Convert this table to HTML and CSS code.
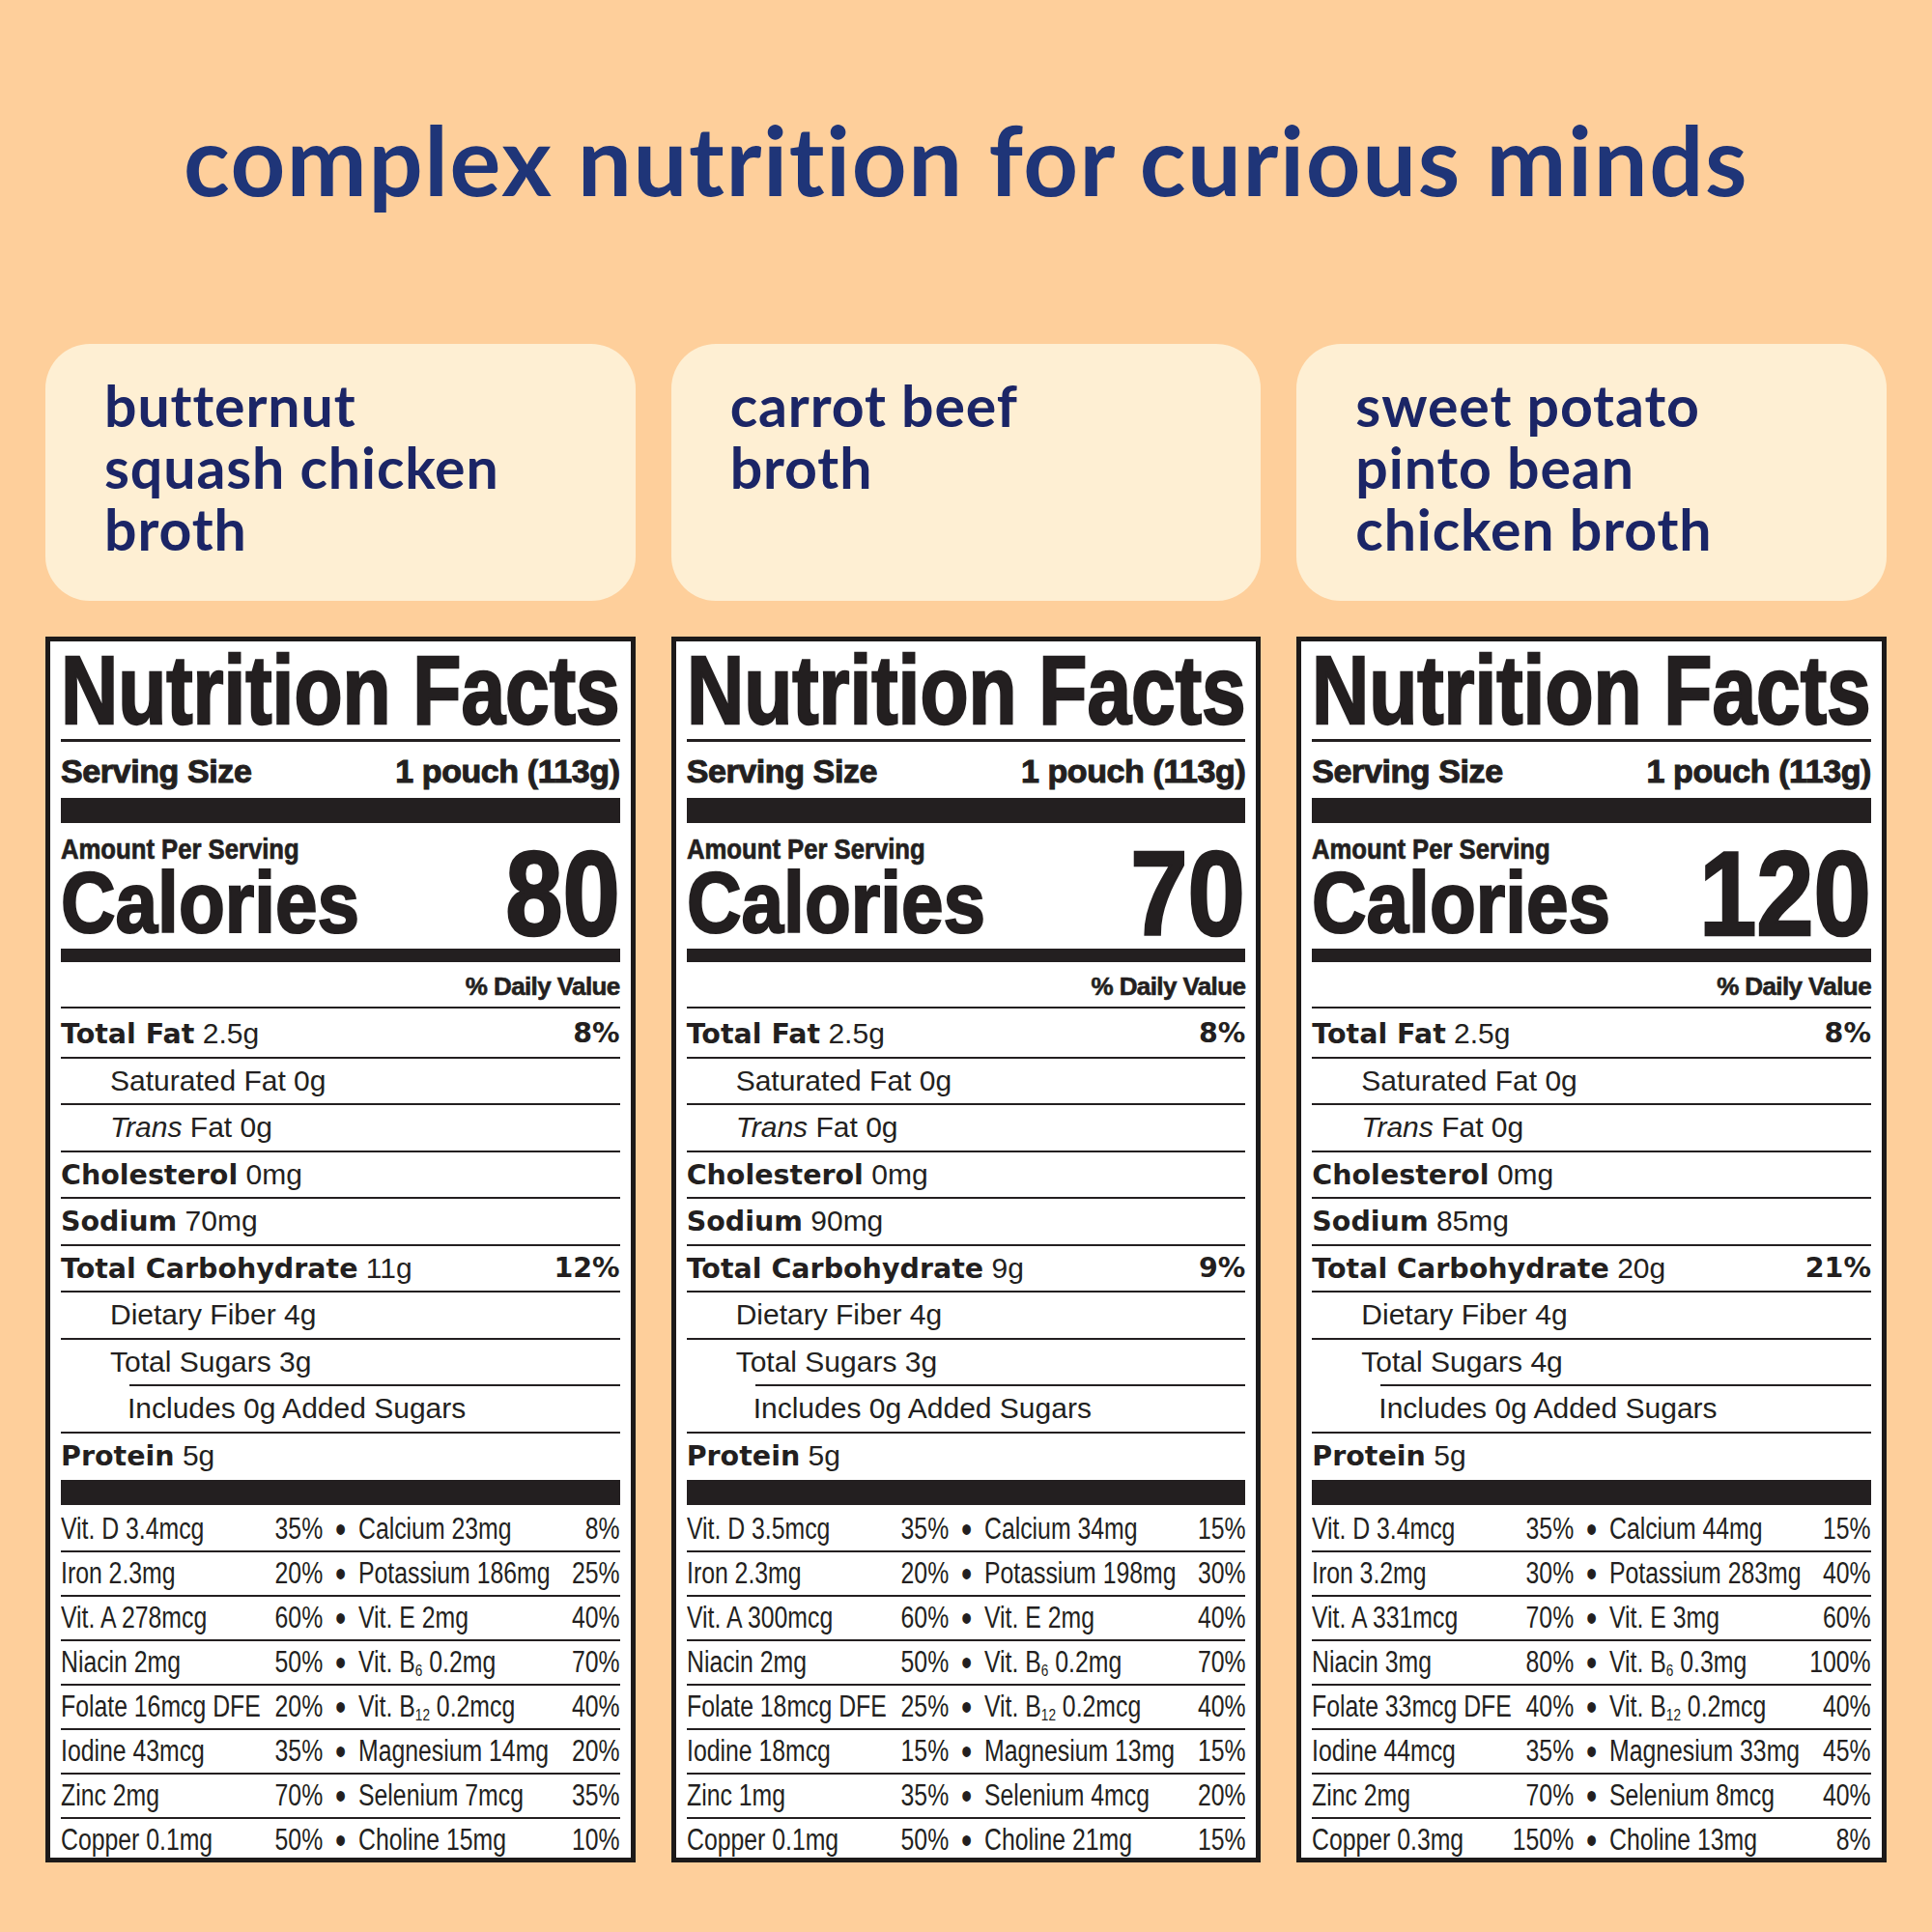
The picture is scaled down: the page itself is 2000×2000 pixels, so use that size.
FILE: index.html
```html
<!DOCTYPE html>
<html>
<head>
<meta charset="utf-8">
<link rel="stylesheet" href="styles.css">
</head>
<body>
<div class="page">
  <h1 class="headline">complex nutrition for curious minds</h1>
  <div class="grid">
    <div class="card"><p>butternut<br>squash chicken<br>broth</p></div>
    <div class="card"><p>carrot beef<br>broth</p></div>
    <div class="card"><p>sweet potato<br>pinto bean<br>chicken broth</p></div>

    <!-- Panel 1 -->
    <div class="panel">
      <div class="nf-title"><span>Nutrition Facts</span></div>
      <div class="serving"><span>Serving Size</span><span>1 pouch (113g)</span></div>
      <div class="cal">
        <div class="cal-left"><div class="amount"><span>Amount Per Serving</span></div><div class="cal-word"><span>Calories</span></div></div>
        <div class="cal-num"><span>80</span></div>
      </div>
      <div class="dv">% Daily Value</div>
      <div class="row r1"><span><b>Total Fat</b> 2.5g</span><b>8%</b></div>
      <div class="row ind"><span>Saturated Fat 0g</span></div>
      <div class="row ind"><span><i>Trans</i> Fat 0g</span></div>
      <div class="row"><span><b>Cholesterol</b> 0mg</span></div>
      <div class="row"><span><b>Sodium</b> 70mg</span></div>
      <div class="row"><span><b>Total Carbohydrate</b> 11g</span><b class="low">12%</b></div>
      <div class="row ind"><span>Dietary Fiber 4g</span></div>
      <div class="row ind sugars"><span>Total Sugars 3g</span></div>
      <div class="row ind2"><span>Includes 0g Added Sugars</span></div>
      <div class="row protein"><span><b>Protein</b> 5g</span></div>
      <div class="vits">
        <div class="vrow"><div class="vin"><div class="vc"><span>Vit. D 3.4mcg</span><span>35%</span></div><span class="dot">•</span><div class="vc"><span>Calcium 23mg</span><span>8%</span></div></div></div>
        <div class="vrow"><div class="vin"><div class="vc"><span>Iron 2.3mg</span><span>20%</span></div><span class="dot">•</span><div class="vc"><span>Potassium 186mg</span><span>25%</span></div></div></div>
        <div class="vrow"><div class="vin"><div class="vc"><span>Vit. A 278mcg</span><span>60%</span></div><span class="dot">•</span><div class="vc"><span>Vit. E 2mg</span><span>40%</span></div></div></div>
        <div class="vrow"><div class="vin"><div class="vc"><span>Niacin 2mg</span><span>50%</span></div><span class="dot">•</span><div class="vc"><span>Vit. B<sub>6</sub> 0.2mg</span><span>70%</span></div></div></div>
        <div class="vrow"><div class="vin"><div class="vc"><span>Folate 16mcg DFE</span><span>20%</span></div><span class="dot">•</span><div class="vc"><span>Vit. B<sub>12</sub> 0.2mcg</span><span>40%</span></div></div></div>
        <div class="vrow"><div class="vin"><div class="vc"><span>Iodine 43mcg</span><span>35%</span></div><span class="dot">•</span><div class="vc"><span>Magnesium 14mg</span><span>20%</span></div></div></div>
        <div class="vrow"><div class="vin"><div class="vc"><span>Zinc 2mg</span><span>70%</span></div><span class="dot">•</span><div class="vc"><span>Selenium 7mcg</span><span>35%</span></div></div></div>
        <div class="vrow last"><div class="vin"><div class="vc"><span>Copper 0.1mg</span><span>50%</span></div><span class="dot">•</span><div class="vc"><span>Choline 15mg</span><span>10%</span></div></div></div>
      </div>
    </div>

    <!-- Panel 2 -->
    <div class="panel">
      <div class="nf-title"><span>Nutrition Facts</span></div>
      <div class="serving"><span>Serving Size</span><span>1 pouch (113g)</span></div>
      <div class="cal">
        <div class="cal-left"><div class="amount"><span>Amount Per Serving</span></div><div class="cal-word"><span>Calories</span></div></div>
        <div class="cal-num"><span>70</span></div>
      </div>
      <div class="dv">% Daily Value</div>
      <div class="row r1"><span><b>Total Fat</b> 2.5g</span><b>8%</b></div>
      <div class="row ind"><span>Saturated Fat 0g</span></div>
      <div class="row ind"><span><i>Trans</i> Fat 0g</span></div>
      <div class="row"><span><b>Cholesterol</b> 0mg</span></div>
      <div class="row"><span><b>Sodium</b> 90mg</span></div>
      <div class="row"><span><b>Total Carbohydrate</b> 9g</span><b class="low">9%</b></div>
      <div class="row ind"><span>Dietary Fiber 4g</span></div>
      <div class="row ind sugars"><span>Total Sugars 3g</span></div>
      <div class="row ind2"><span>Includes 0g Added Sugars</span></div>
      <div class="row protein"><span><b>Protein</b> 5g</span></div>
      <div class="vits">
        <div class="vrow"><div class="vin"><div class="vc"><span>Vit. D 3.5mcg</span><span>35%</span></div><span class="dot">•</span><div class="vc"><span>Calcium 34mg</span><span>15%</span></div></div></div>
        <div class="vrow"><div class="vin"><div class="vc"><span>Iron 2.3mg</span><span>20%</span></div><span class="dot">•</span><div class="vc"><span>Potassium 198mg</span><span>30%</span></div></div></div>
        <div class="vrow"><div class="vin"><div class="vc"><span>Vit. A 300mcg</span><span>60%</span></div><span class="dot">•</span><div class="vc"><span>Vit. E 2mg</span><span>40%</span></div></div></div>
        <div class="vrow"><div class="vin"><div class="vc"><span>Niacin 2mg</span><span>50%</span></div><span class="dot">•</span><div class="vc"><span>Vit. B<sub>6</sub> 0.2mg</span><span>70%</span></div></div></div>
        <div class="vrow"><div class="vin"><div class="vc"><span>Folate 18mcg DFE</span><span>25%</span></div><span class="dot">•</span><div class="vc"><span>Vit. B<sub>12</sub> 0.2mcg</span><span>40%</span></div></div></div>
        <div class="vrow"><div class="vin"><div class="vc"><span>Iodine 18mcg</span><span>15%</span></div><span class="dot">•</span><div class="vc"><span>Magnesium 13mg</span><span>15%</span></div></div></div>
        <div class="vrow"><div class="vin"><div class="vc"><span>Zinc 1mg</span><span>35%</span></div><span class="dot">•</span><div class="vc"><span>Selenium 4mcg</span><span>20%</span></div></div></div>
        <div class="vrow last"><div class="vin"><div class="vc"><span>Copper 0.1mg</span><span>50%</span></div><span class="dot">•</span><div class="vc"><span>Choline 21mg</span><span>15%</span></div></div></div>
      </div>
    </div>

    <!-- Panel 3 -->
    <div class="panel">
      <div class="nf-title"><span>Nutrition Facts</span></div>
      <div class="serving"><span>Serving Size</span><span>1 pouch (113g)</span></div>
      <div class="cal">
        <div class="cal-left"><div class="amount"><span>Amount Per Serving</span></div><div class="cal-word"><span>Calories</span></div></div>
        <div class="cal-num"><span>120</span></div>
      </div>
      <div class="dv">% Daily Value</div>
      <div class="row r1"><span><b>Total Fat</b> 2.5g</span><b>8%</b></div>
      <div class="row ind"><span>Saturated Fat 0g</span></div>
      <div class="row ind"><span><i>Trans</i> Fat 0g</span></div>
      <div class="row"><span><b>Cholesterol</b> 0mg</span></div>
      <div class="row"><span><b>Sodium</b> 85mg</span></div>
      <div class="row"><span><b>Total Carbohydrate</b> 20g</span><b class="low">21%</b></div>
      <div class="row ind"><span>Dietary Fiber 4g</span></div>
      <div class="row ind sugars"><span>Total Sugars 4g</span></div>
      <div class="row ind2"><span>Includes 0g Added Sugars</span></div>
      <div class="row protein"><span><b>Protein</b> 5g</span></div>
      <div class="vits">
        <div class="vrow"><div class="vin"><div class="vc"><span>Vit. D 3.4mcg</span><span>35%</span></div><span class="dot">•</span><div class="vc"><span>Calcium 44mg</span><span>15%</span></div></div></div>
        <div class="vrow"><div class="vin"><div class="vc"><span>Iron 3.2mg</span><span>30%</span></div><span class="dot">•</span><div class="vc"><span>Potassium 283mg</span><span>40%</span></div></div></div>
        <div class="vrow"><div class="vin"><div class="vc"><span>Vit. A 331mcg</span><span>70%</span></div><span class="dot">•</span><div class="vc"><span>Vit. E 3mg</span><span>60%</span></div></div></div>
        <div class="vrow"><div class="vin"><div class="vc"><span>Niacin 3mg</span><span>80%</span></div><span class="dot">•</span><div class="vc"><span>Vit. B<sub>6</sub> 0.3mg</span><span>100%</span></div></div></div>
        <div class="vrow"><div class="vin"><div class="vc"><span>Folate 33mcg DFE</span><span>40%</span></div><span class="dot">•</span><div class="vc"><span>Vit. B<sub>12</sub> 0.2mcg</span><span>40%</span></div></div></div>
        <div class="vrow"><div class="vin"><div class="vc"><span>Iodine 44mcg</span><span>35%</span></div><span class="dot">•</span><div class="vc"><span>Magnesium 33mg</span><span>45%</span></div></div></div>
        <div class="vrow"><div class="vin"><div class="vc"><span>Zinc 2mg</span><span>70%</span></div><span class="dot">•</span><div class="vc"><span>Selenium 8mcg</span><span>40%</span></div></div></div>
        <div class="vrow last"><div class="vin"><div class="vc"><span>Copper 0.3mg</span><span>150%</span></div><span class="dot">•</span><div class="vc"><span>Choline 13mg</span><span>8%</span></div></div></div>
      </div>
    </div>
  </div>
</div>
</body>
</html>
```

FILE: styles.css
```css
* { box-sizing: border-box; }
html { background: #fecf9b; }
body {
  margin: 0;
  background: #fecf9b;
  min-height: 2000px;
}
.page {
  padding: 0 47px;
}
.headline {
  margin: 0;
  padding-top: 106px;
  font-family: "Lato", "Noto Sans", sans-serif;
  font-weight: 700;
  font-size: 99px;
  line-height: 1.2;
  text-align: center;
  color: #1f3578;
  letter-spacing: 1.6px;
  font-variant-ligatures: none;
  white-space: nowrap;
}
.grid {
  margin-top: 131px;
  display: grid;
  grid-template-columns: repeat(3, minmax(0, 1fr));
  column-gap: 37px;
  row-gap: 37px;
}
.card {
  background: #feefd3;
  border-radius: 46px;
  height: 266px;
  padding: 32px 30px 0 61px;
}
.card p {
  margin: 0;
  font-family: "Lato", "Noto Sans", sans-serif;
  font-weight: 700;
  font-size: 59px;
  line-height: 64px;
  letter-spacing: 0.9px;
  font-variant-ligatures: none;
  color: #1b2566;
  white-space: nowrap;
}

/* Nutrition panel */
.panel {
  min-width: 0;
  overflow: hidden;
  background: #fff;
  border: 5px solid #1c1a1a;
  padding: 0 11px;
  color: #231f20;
  font-family: "Liberation Sans", Arial, sans-serif;
}
.nf-title {
  height: 104px;
  border-bottom: 3px solid #231f20;
  font-weight: 700;
  font-size: 100px;
  line-height: 101px;
  white-space: nowrap;
}
.nf-title span {
  display: inline-block;
  transform: scaleX(0.82);
  transform-origin: 0 0;
  -webkit-text-stroke: 2.4px #231f20;
}
.serving {
  height: 58px;
  display: flex;
  justify-content: space-between;
  font-weight: 700;
  font-size: 34px;
  line-height: 60px;
  letter-spacing: -0.4px;
  white-space: nowrap;
  -webkit-text-stroke: 1px #231f20;
}
.cal {
  height: 156px;
  border-top: 26px solid #231f20;
  display: flex;
  justify-content: space-between;
  white-space: nowrap;
  font-weight: 700;
}
.cal-left {
  padding-top: 12px;
}
.amount {
  font-size: 29.5px;
  line-height: 30px;
}
.amount span {
  display: inline-block;
  transform: scaleX(0.87);
  transform-origin: 0 0;
  -webkit-text-stroke: 0.7px #231f20;
}
.cal-word {
  font-size: 89px;
  line-height: 80px;
}
.cal-word span {
  display: inline-block;
  transform: scaleX(0.88);
  transform-origin: 0 0;
  -webkit-text-stroke: 2.2px #231f20;
}
.cal-num {
  align-self: flex-end;
  margin-bottom: 7px;
  font-size: 124px;
  line-height: 100px;
  text-align: right;
}
.cal-num span {
  display: inline-block;
  transform: scaleX(0.86);
  transform-origin: 100% 0;
  -webkit-text-stroke: 2.6px #231f20;
}
.dv {
  height: 62px;
  border-top: 14px solid #231f20;
  border-bottom: 2px solid #231f20;
  text-align: right;
  font-weight: 700;
  font-size: 26px;
  line-height: 50px;
  letter-spacing: -0.6px;
  -webkit-text-stroke: 0.6px #231f20;
  white-space: nowrap;
}
.row {
  height: 48.5px;
  border-bottom: 2px solid #231f20;
  display: flex;
  justify-content: space-between;
  font-size: 30px;
  line-height: 46.5px;
  white-space: nowrap;
}
.row b {
  font-family: "DejaVu Sans", sans-serif;
  font-weight: 700;
  font-size: 28.5px;
}
.row b.low {
  vertical-align: -3px;
}
.row i { font-style: italic; }
.r1 {
  height: 52px;
  padding-top: 3.5px;
}
.ind { padding-left: 51px; }
.ind2 { padding-left: 69px; }
.sugars {
  border-bottom: 0;
  background: linear-gradient(#231f20, #231f20) no-repeat right bottom / calc(100% - 71px) 2px;
}
.protein {
  height: 48px;
  border-bottom: 0;
  line-height: 45px;
}
.vits {
  border-top: 26px solid #231f20;
  padding-top: 3px;
}
.vrow {
  height: 46px;
  border-bottom: 2px solid #231f20;
  font-size: 31px;
  line-height: 44px;
  white-space: nowrap;
}
.vrow.last {
  height: 40px;
  border-bottom: 0;
}
.vin {
  width: calc(100% / 0.8);
  transform: scaleX(0.8);
  transform-origin: 0 0;
  display: grid;
  grid-template-columns: 339px 46px 1fr;
}
.vc {
  display: flex;
  justify-content: space-between;
}
.dot {
  text-align: center;
  font-size: 40px;
}
sub {
  font-size: 17px;
  line-height: 0;
  vertical-align: -4px;
}
```
